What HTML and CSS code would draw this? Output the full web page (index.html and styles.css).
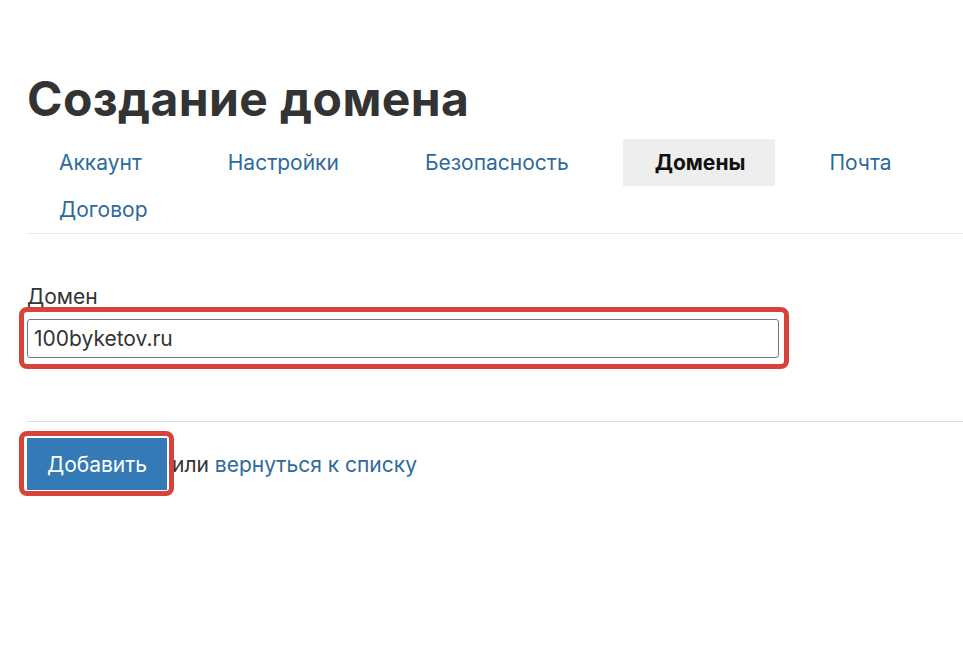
FILE: index.html
```html
<!DOCTYPE html>
<html lang="ru">
<head>
    <meta charset="UTF-8">
    <title>Создание домена</title>
    <link rel="stylesheet" href="styles.css">
</head>
<body>

<main class="page">
    <h1 class="title">Создание домена</h1>

    <ul class="tabs">
        <li><a href="#">Аккаунт</a></li>
        <li><a href="#">Настройки</a></li>
        <li><a href="#">Безопасность</a></li>
        <li class="active"><a href="#">Домены</a></li>
        <li><a href="#">Почта</a></li>
        <li><a href="#">Договор</a></li>
    </ul>

    <form class="domain-form">
        <div class="field">
            <label for="domain">Домен</label>
            <div class="mark mark-input">
                <input type="text" id="domain" name="domain" value="100byketov.ru">
            </div>
        </div>

        <div class="actions">
            <span class="mark mark-button">
                <button type="submit">Добавить</button>
            </span>
            <span class="or">или <a href="#">вернуться к списку</a></span>
        </div>
    </form>
</main>

</body>
</html>
```

FILE: styles.css
```css
/* Базовые стили */
* {
    box-sizing: border-box;
    margin: 0;
    padding: 0;
}

body {
    font-family: Inter, "Noto Sans", sans-serif;
    color: #333;
    background: #fff;
}

a {
    color: #2f6a9c;
    text-decoration: none;
}

.page {
    min-height: 666px;
    padding: 70px 0 100px 27px;
}

/* Заголовок */
.title {
    font-size: 48px;
    font-weight: 700;
    line-height: 58px;
    color: #333;
    letter-spacing: 0.4px;
}

/* Вкладки */
.tabs {
    list-style: none;
    display: flex;
    flex-wrap: wrap;
    margin-top: 11px;
    border-bottom: 1px solid #e8e8e8;
}

.tabs li {
    margin-right: 22px;
}

.tabs a {
    display: block;
    padding: 0 32px 0 32px;
    line-height: 47px;
    font-size: 21px;
}

.tabs .active a {
    padding-right: 30px;
    background: #eeeeee;
    color: #111;
    font-weight: 700;
}

/* Форма */
.domain-form {
    padding-top: 50px;
}

.field {
    padding-bottom: 63px;
    border-bottom: 1px solid #ddd;
}

.field label {
    display: block;
    font-size: 21px;
    line-height: 26px;
    margin-bottom: 9px;
}

.field input {
    width: 752px;
    height: 39px;
    padding: 0 6px;
    border: 1px solid #777;
    border-radius: 3px;
    font-family: inherit;
    font-size: 21px;
    color: #333;
}

.actions {
    display: flex;
    align-items: center;
    padding-top: 16px;
    font-size: 21px;
}

.actions button {
    display: block;
    width: 140px;
    height: 52px;
    border: none;
    background: #337ab7;
    color: #fff;
    font-family: inherit;
    font-size: 21px;
    cursor: pointer;
}

.or {
    margin-left: 5px;
}

/* Красная рамка-пометка поверх элементов */
.mark {
    position: relative;
    display: inline-block;
}

.mark::after {
    content: "";
    position: absolute;
    border: 5px solid #d7433a;
    border-radius: 8px;
    pointer-events: none;
}

.mark-input {
    display: block;
    width: 752px;
}

.mark-input::after {
    top: -12px;
    right: -10px;
    bottom: -11px;
    left: -8px;
}

.mark-button::after {
    top: -7px;
    right: -7px;
    bottom: -6px;
    left: -8px;
}
```
